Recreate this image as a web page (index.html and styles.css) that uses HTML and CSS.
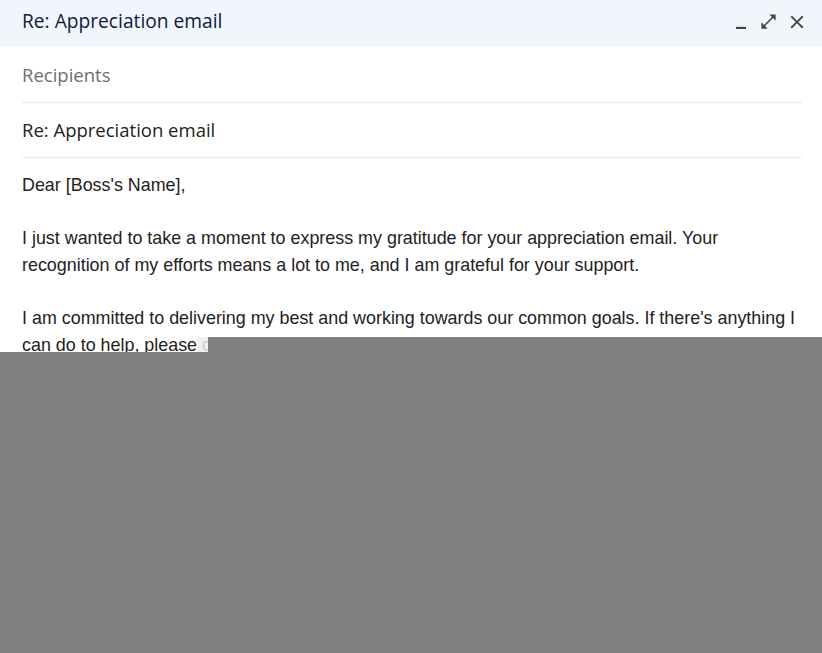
FILE: index.html
```html
<!DOCTYPE html>
<html>
<head>
<meta charset="utf-8">
<link rel="stylesheet" href="styles.css">
</head>
<body>
<div class="compose">
  <div class="header">
    <div class="title">Re: Appreciation email</div>
    <div class="actions">
      <svg class="ic ic-min" viewBox="0 0 24 24"><path d="M6 19h12v2.6H6z"/></svg>
      <svg class="ic ic-exp" viewBox="0 0 24 24"><path d="M21 11V3h-8l3.29 3.29-10 10L3 13v8h8l-3.29-3.29 10-10z"/></svg>
      <svg class="ic ic-close" viewBox="0 0 24 24"><path d="M19 6.41L17.59 5 12 10.59 6.41 5 5 6.41 10.59 12 5 17.59 6.41 19 12 13.41 17.59 19 19 17.59 13.41 12z"/></svg>
    </div>
  </div>
  <div class="field recipients">Recipients</div>
  <div class="field subject">Re: Appreciation email</div>
  <div class="body">
    <p>Dear [Boss's Name],</p>
    <p>I just wanted to take a moment to express my gratitude for your appreciation email. Your recognition of my efforts means a lot to me, and I am grateful for your support.</p>
    <p>I am committed to delivering my best and working towards our common goals. If there's anything I can do to help, please don't hesitate to let me know.</p>
    <p>Thank you again for your kind words.</p>
  </div>
</div>
<div class="shade shade-a"></div>
<div class="shade shade-b"></div>
<div class="shade-chip"></div>
</body>
</html>
```
FILE: styles.css
```css
html, body {
  margin: 0;
  padding: 0;
  background: #ffffff;
  height: 100%;
  overflow: hidden;
}
.compose {
  width: 822px;
}
.header {
  height: 47px;
  background: #f2f6fc;
  display: flex;
  align-items: center;
  justify-content: space-between;
  padding: 0 14px 0 22px;
}
.title {
  font-family: "Open Sans", Roboto, sans-serif;
  font-size: 19.2px;
  color: #0b2040;
  margin-top: -6px;
}
.actions {
  display: flex;
  align-items: center;
  gap: 4px;
  margin-top: -4px;
}
.ic {
  width: 18px;
  height: 18px;
  fill: #444746;
}
.ic-min { width: 20px; height: 20px; margin-top: -2px; }
.ic-exp { width: 19px; height: 19px; margin-left: 4px; }
.ic-close { width: 22px; height: 22px; margin-left: 4px; }
.field {
  margin: 0 20px 0 22px;
  height: 54px;
  border-bottom: 1px solid #e8eaed;
  display: flex;
  align-items: center;
  font-family: "Open Sans", Roboto, sans-serif;
  font-size: 18.5px;
}
.recipients {
  color: #6f6f6f;
  height: 55px;
}
.subject {
  color: #222222;
  padding-bottom: 1px;
  height: 53px;
}
.body {
  padding: 14px 24px 0 22px;
  font-family: "Liberation Sans", Arial, sans-serif;
  font-size: 17.9px;
  line-height: 26.7px;
  color: #222222;
}
.body p {
  margin: 0 0 26.7px 0;
}
.shade {
  position: absolute;
  background: #808080;
}
.shade-a {
  left: 208px;
  top: 337px;
  right: 0;
  bottom: 0;
}
.shade-b {
  left: 0;
  top: 352px;
  right: 0;
  bottom: 0;
}
.shade-chip {
  position: absolute;
  left: 197px;
  top: 337px;
  width: 11px;
  height: 15px;
  background: rgba(236, 236, 236, 0.85);
}
```
